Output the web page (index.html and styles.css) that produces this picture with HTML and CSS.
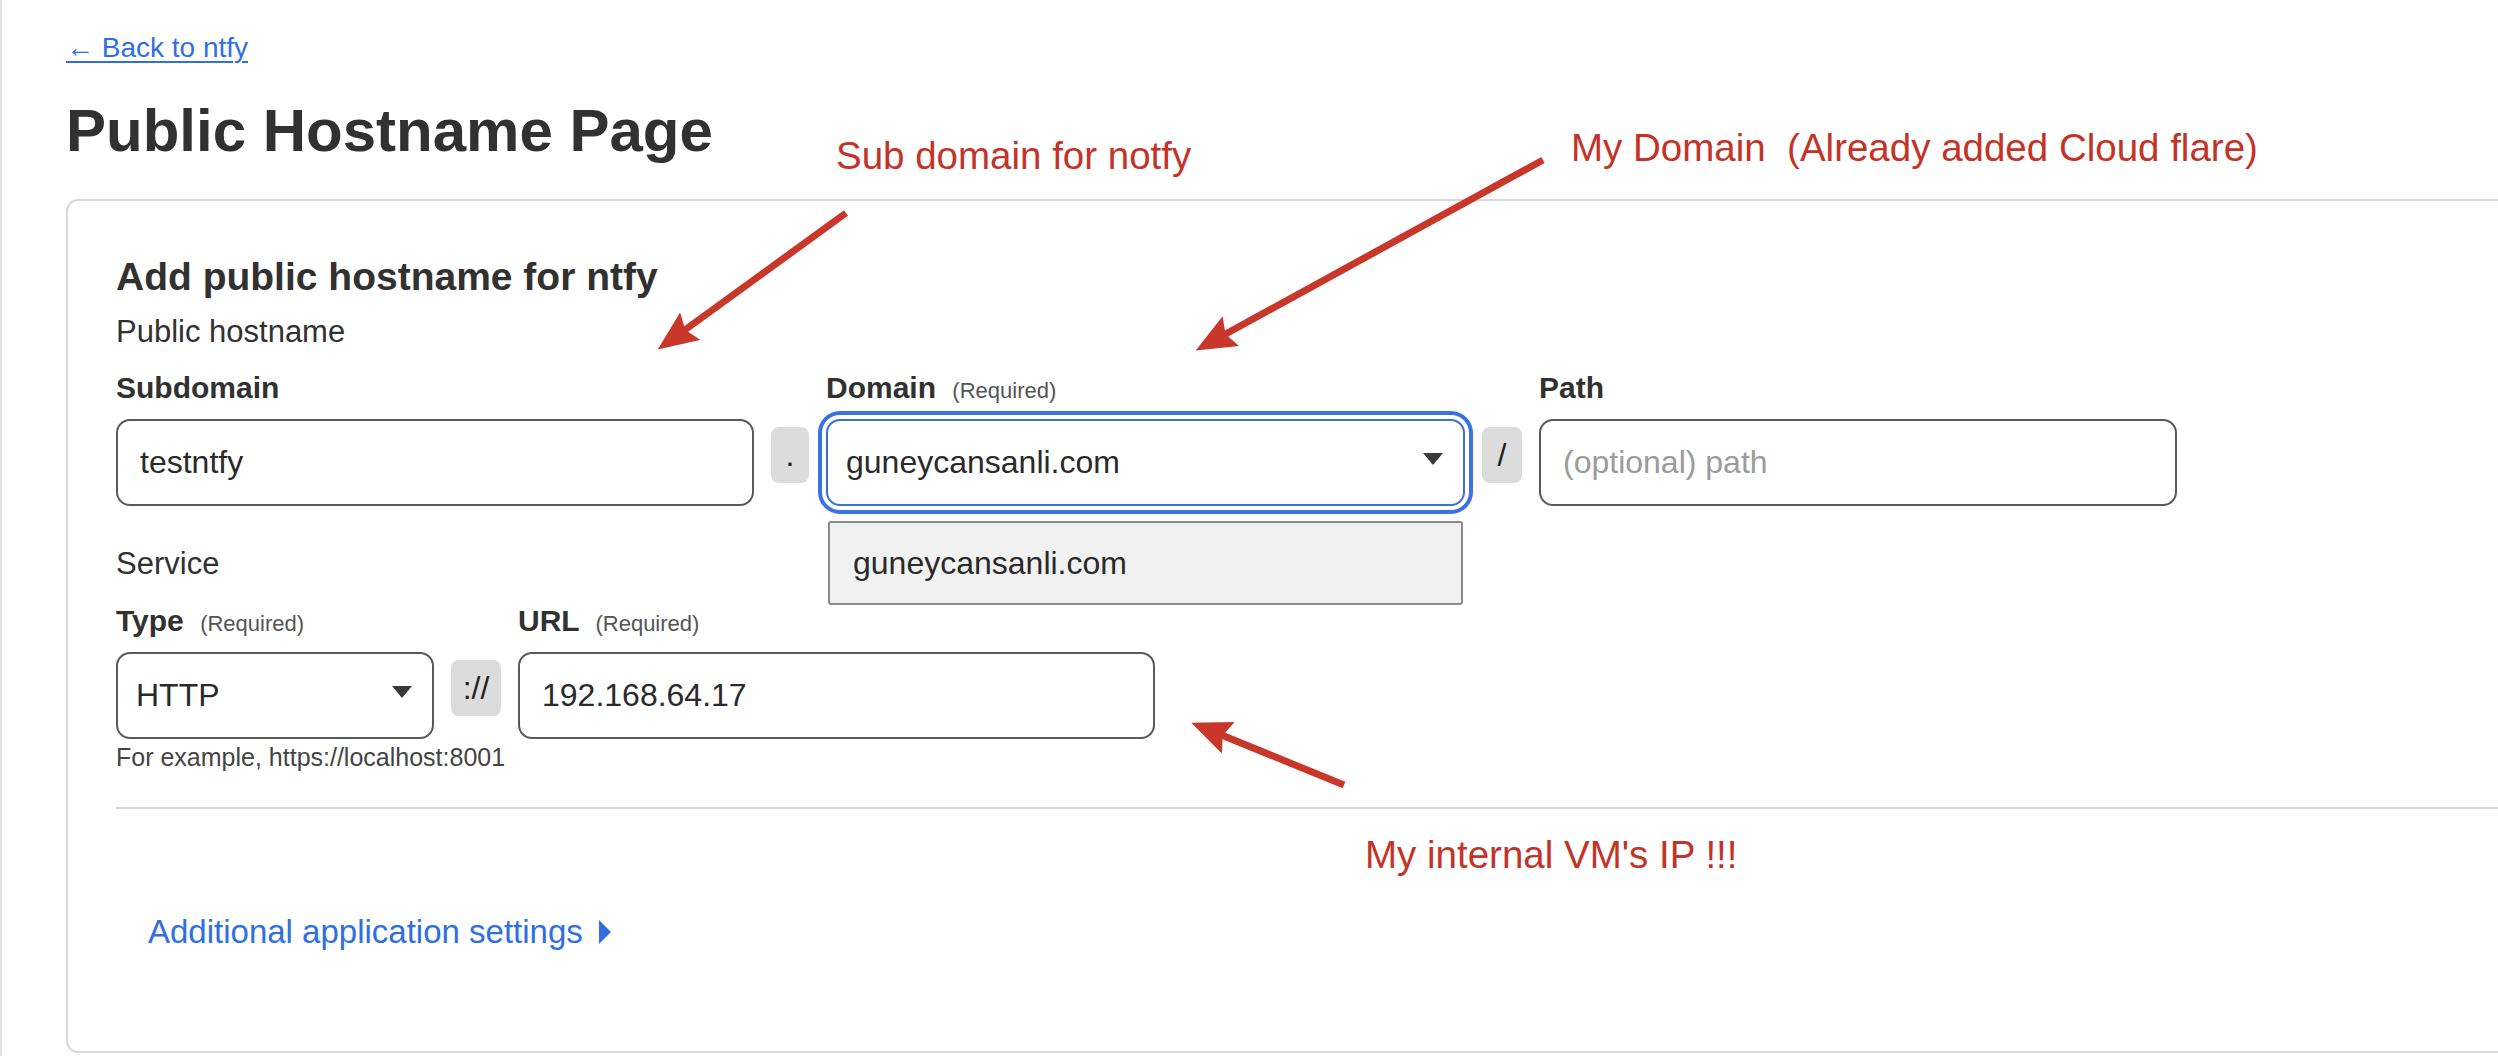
FILE: index.html
```html
<!DOCTYPE html>
<html lang="en">
<head>
<meta charset="utf-8">
<title>Public Hostname Page</title>
<link rel="stylesheet" href="styles.css">
</head>
<body>
<div class="page">
  <a class="back" href="#">← Back to ntfy</a>
  <h1 class="title">Public Hostname Page</h1>

  <section class="card">
    <h2 class="card-title">Add public hostname for ntfy</h2>
    <div class="group-label">Public hostname</div>

    <div class="row row-host">
      <div class="field w-sub">
        <div class="label">Subdomain</div>
        <div class="input"><span class="value">testntfy</span></div>
      </div>
      <div class="sep sep-dot">.</div>
      <div class="field w-dom">
        <div class="label">Domain <span class="req">(Required)</span></div>
        <div class="select focused">
          <span class="value">guneycansanli.com</span>
          <svg class="caret" width="20" height="12" viewBox="0 0 20 12"><polygon points="0,0 20,0 10,12" fill="#3a3a3a"/></svg>
          <div class="menu"><div class="menu-item">guneycansanli.com</div></div>
        </div>
      </div>
      <div class="sep sep-slash">/</div>
      <div class="field w-path">
        <div class="label">Path</div>
        <div class="input"><span class="placeholder">(optional) path</span></div>
      </div>
    </div>

    <div class="group-label service">Service</div>

    <div class="row row-service">
      <div class="field w-type">
        <div class="label">Type <span class="req">(Required)</span></div>
        <div class="select">
          <span class="value">HTTP</span>
          <svg class="caret" width="20" height="12" viewBox="0 0 20 12"><polygon points="0,0 20,0 10,12" fill="#3a3a3a"/></svg>
        </div>
      </div>
      <div class="sep sep-scheme">://</div>
      <div class="field w-url">
        <div class="label">URL <span class="req">(Required)</span></div>
        <div class="input"><span class="value">192.168.64.17</span></div>
      </div>
    </div>
    <div class="help">For example, https://localhost:8001</div>

    <hr class="divider">

    <a class="more" href="#">Additional application settings <svg class="more-caret" width="12" height="24" viewBox="0 0 12 24"><polygon points="0,0 12,12 0,24" fill="#2f6fe3"/></svg></a>
  </section>

  <div class="annot annot-sub">Sub domain for notfy</div>
  <div class="annot annot-dom">My Domain  (Already added Cloud flare)</div>
  <div class="annot annot-ip">My internal VM's IP !!!</div>

  <svg class="arrows" width="2498" height="1056" viewBox="0 0 2498 1056">
    <defs>
      <marker id="head" viewBox="0 0 40 34" refX="10" refY="17" markerWidth="40" markerHeight="34" markerUnits="userSpaceOnUse" orient="auto">
        <path d="M0,0 L40,17 L0,34 L6,17 z" fill="#c8372a"/>
      </marker>
    </defs>
    <line x1="844" y1="213" x2="680" y2="332" stroke="#c8372a" stroke-width="7" marker-end="url(#head)"/>
    <line x1="1541" y1="160" x2="1220" y2="336" stroke="#c8372a" stroke-width="7" marker-end="url(#head)"/>
    <line x1="1342" y1="785" x2="1217" y2="734" stroke="#c8372a" stroke-width="7" marker-end="url(#head)"/>
  </svg>
</div>
</body>
</html>
```

FILE: styles.css
```css
html, body {
  margin: 0;
  padding: 0;
  overflow: hidden;
  background: #ffffff;
}

body {
  font-family: "Liberation Sans", Arial, sans-serif;
  color: #313131;
}

.page {
  position: relative;
  width: 2498px;
  height: 1056px;
  box-sizing: border-box;
  border-left: 2px solid #e2e2e2;
  padding: 31px 0 0 64px;
}

.back {
  display: block;
  width: max-content;
  font-size: 28px;
  line-height: 34px;
  color: #2f6fe3;
  text-decoration: underline;
  text-decoration-thickness: 2px;
  text-underline-offset: 4px;
}

.title {
  margin: 31px 0 0;
  font-size: 60px;
  line-height: 70px;
  font-weight: 700;
  color: #313131;
}

.card {
  margin-top: 33px;
  width: 2600px;
  box-sizing: border-box;
  border: 2px solid #dadada;
  border-radius: 12px;
  padding: 53px 48px 99px 48px;
}

.card-title {
  margin: 0;
  font-size: 39px;
  line-height: 46px;
  font-weight: 700;
  color: #313131;
}

.group-label {
  margin-top: 14px;
  font-size: 31px;
  line-height: 36px;
}

.group-label.service {
  margin-top: 40px;
}

.row {
  display: flex;
  align-items: flex-end;
  gap: 17px;
  margin-top: 20px;
}

.row-service {
  margin-top: 21px;
}

.field {
  display: flex;
  flex-direction: column;
}

.label {
  font-size: 30px;
  line-height: 36px;
  height: 36px;
  font-weight: 700;
  margin-bottom: 13px;
  white-space: nowrap;
}

.req {
  font-size: 22px;
  line-height: 1;
  font-weight: 400;
  color: #555555;
  margin-left: 8px;
}

.w-sub { width: 638px; }
.w-dom { width: 639px; }
.w-path { width: 638px; }
.w-type { width: 318px; }
.w-url { width: 637px; }

.input,
.select {
  position: relative;
  height: 87px;
  box-sizing: border-box;
  border: 2px solid #5a5a5a;
  border-radius: 14px;
  display: flex;
  align-items: center;
  font-size: 32px;
  background: #fff;
}

.input {
  padding-left: 22px;
}

.select {
  padding-left: 18px;
  padding-right: 20px;
  justify-content: space-between;
}

.select.focused {
  border-color: #3b6fd6;
  box-shadow: 0 0 0 4px #ffffff, 0 0 0 8px #3a72e2;
}

.value {
  color: #2a2a2a;
}

.placeholder {
  color: #9b9b9b;
}

.caret {
  display: block;
  margin-top: -8px;
}

.menu {
  position: absolute;
  left: 0;
  right: 0;
  top: calc(100% + 17px);
  height: 84px;
  box-sizing: border-box;
  background: #f1f1f1;
  border: 2px solid #8a8a8a;
  border-radius: 3px;
  display: flex;
  align-items: center;
  padding-left: 23px;
  z-index: 2;
}

.menu-item {
  font-size: 32px;
  color: #2a2a2a;
}

.sep {
  box-sizing: border-box;
  height: 56px;
  margin-bottom: 23px;
  background: #dcdcdc;
  border-radius: 8px;
  display: flex;
  align-items: center;
  justify-content: center;
  font-size: 32px;
  color: #222;
}

.sep-dot { width: 38px; }
.sep-slash { width: 40px; }
.sep-scheme { width: 50px; }

.help {
  margin-top: 3px;
  font-size: 25px;
  line-height: 30px;
  color: #444444;
}

.divider {
  margin: 35px 0 0;
  border: 0;
  height: 2px;
  background: #d8d8d8;
}

.more {
  display: flex;
  align-items: center;
  gap: 16px;
  width: max-content;
  margin-top: 103px;
  margin-left: 32px;
  font-size: 33px;
  line-height: 40px;
  color: #2f6fe3;
  text-decoration: none;
}

.more-caret {
  display: block;
}

.annot {
  position: absolute;
  font-size: 38.5px;
  line-height: 38.5px;
  color: #c33327;
  white-space: pre;
}

.annot-sub { left: 834px; top: 137px; }
.annot-dom { left: 1569px; top: 129px; }
.annot-ip { left: 1363px; top: 836px; }

.arrows {
  position: absolute;
  left: 0;
  top: 0;
  pointer-events: none;
}
```
